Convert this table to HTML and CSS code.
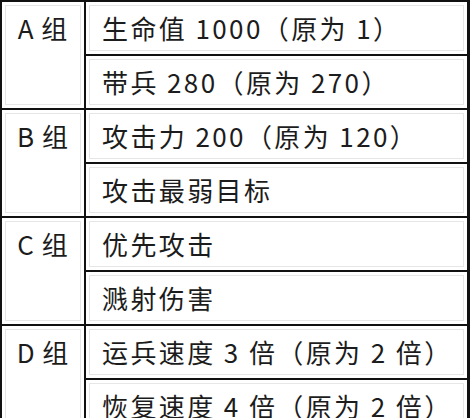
FILE: index.html
```html
<!DOCTYPE html>
<html lang="zh">
<head>
<meta charset="utf-8">
<link rel="stylesheet" href="styles.css">
</head>
<body>
<div class="table">
  <div class="group">A 组</div>
  <div class="cell">生命值 1000（原为 1）</div>
  <div class="cell">带兵 280（原为 270）</div>
  <div class="group">B 组</div>
  <div class="cell">攻击力 200（原为 120）</div>
  <div class="cell">攻击最弱目标</div>
  <div class="group">C 组</div>
  <div class="cell">优先攻击</div>
  <div class="cell">溅射伤害</div>
  <div class="group">D 组</div>
  <div class="cell">运兵速度 3 倍（原为 2 倍）</div>
  <div class="cell">恢复速度 4 倍（原为 2 倍）</div>
</div>
</body>
</html>
```

FILE: styles.css
```css
html, body {
  margin: 0;
  padding: 0;
  background: #ffffff;
  overflow: hidden;
}
body {
  width: 471px;
  height: 418px;
  font-family: "Noto Sans CJK SC", "Noto Sans", sans-serif;
  color: #1c1c1c;
}
.table {
  width: 470px;
  box-sizing: border-box;
  display: grid;
  grid-template-columns: 82px 1fr;
  grid-template-rows: repeat(8, 52px);
  gap: 2px;
  padding: 2px 3px 2px 2px;
  background: #111111;
}
.group, .cell {
  background: #ffffff;
  box-shadow: inset 0 0 0 3px #ffffff, inset 0 0 0 4px #e6e6e6;
  height: 52px;
  line-height: 52px;
  font-size: 26px;
  white-space: nowrap;
  overflow: hidden;
}
.group {
  grid-row: span 2;
  height: auto;
  text-align: center;
  letter-spacing: 1px;
}
.cell {
  padding-left: 16px;
  letter-spacing: 2.4px;
}
```
